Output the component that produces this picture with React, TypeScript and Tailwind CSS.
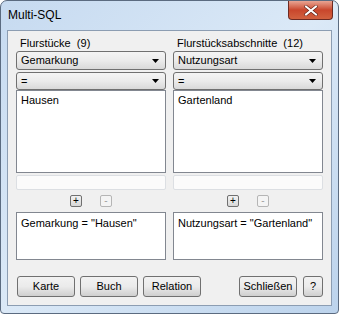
import React from 'react';

const font = { fontFamily: '"Liberation Sans", Arial, sans-serif' };

const Combo = ({ label, h }: { label: string; h: string }) => (
  <div
    className={`flex ${h} items-center justify-between rounded-[3px] border border-[#707070] bg-gradient-to-b from-[#f4f4f4] via-[#ebebeb] to-[#d9d9d9] pl-[4px] pr-[6px] text-[11px] leading-none text-black`}
  >
    <span>{label}</span>
    <svg width="7" height="4" viewBox="0 0 7 4">
      <path d="M0 0h7L3.5 4z" fill="#000" />
    </svg>
  </div>
);

const SmallBtn = ({ sign, disabled }: { sign: string; disabled?: boolean }) => (
  <div
    className={`flex h-[12px] w-[12px] items-center justify-center rounded-[2px] border text-[10px] leading-none ${
      disabled
        ? 'border-[#b5b5b5] bg-[#f4f4f4] text-[#a0a0a0]'
        : 'border-[#707070] bg-gradient-to-b from-[#f2f2f2] to-[#d8d8d8] text-black'
    }`}
  >
    {sign}
  </div>
);

const Column = ({
  title,
  field,
  value,
  query,
}: {
  title: string;
  field: string;
  value: string;
  query: string;
}) => (
  <div className="flex w-[150px] flex-col">
    <div className="h-[20px] whitespace-pre pl-[4px] pt-[7px] text-[11px] leading-none">{title}</div>
    <div className="flex flex-col gap-[2px]">
      <Combo label={field} h="h-[19px]" />
      <Combo label="=" h="h-[18px]" />
    </div>
    <div className="h-[83px] border border-[#828790] bg-white px-[4px] pt-[2px] text-[11px] leading-[14px]">
      {value}
    </div>
    <div className="mt-[2px] h-[15px] rounded-[2px] border border-[#dcdfe3] bg-[#fbfbfb]" />
    <div className="flex h-[22px] items-center justify-center gap-[18px]">
      <SmallBtn sign="+" />
      <SmallBtn sign="-" disabled />
    </div>
    <div className="h-[48px] whitespace-nowrap border border-[#828790] bg-white px-[4px] pt-[3px] text-[11px] leading-[14px]">
      {query}
    </div>
  </div>
);

const Btn = ({ label, w }: { label: string; w: string }) => (
  <div
    className={`flex h-[21px] ${w} items-center justify-center rounded-[3px] border border-[#707070] bg-gradient-to-b from-[#f2f2f2] via-[#ebebeb] to-[#cfcfcf] text-[11px] leading-none text-black`}
  >
    {label}
  </div>
);

export default function App() {
  return (
    <div className="h-[314px] w-[339px] bg-white" style={font}>
      <div className="flex h-full w-full flex-col rounded-t-[7px] rounded-b-[4px] border border-[#5b6b80] bg-gradient-to-br from-[#c6daf0] via-[#dbe9f7] to-[#bcd3ec]">
        <div className="flex h-[29px] items-start justify-between">
          <div className="pl-[7px] pt-[8px] text-[12px] leading-none text-black">Multi-SQL</div>
          <div className="mr-[5px] flex h-[19px] w-[45px] items-center justify-center rounded-b-[4px] border border-t-0 border-[#6d2a22] bg-gradient-to-b from-[#e8a493] via-[#c9462c] to-[#d2613f]">
            <svg width="14" height="11" viewBox="0 0 14 11">
              <path d="M2 1.5l10 8M12 1.5l-10 8" stroke="#5a1a10" strokeWidth="3.2" strokeLinecap="square" />
              <path d="M2 1.5l10 8M12 1.5l-10 8" stroke="#ffffff" strokeWidth="2" strokeLinecap="square" />
            </svg>
          </div>
        </div>
        <div className="mx-[6px] mb-[7px] flex flex-1 flex-col border border-[#8c9db2] bg-[#f0f0f0] px-[8px]">
          <div className="flex gap-[7px]">
            <Column
              title="Flurstücke  (9)"
              field="Gemarkung"
              value="Hausen"
              query={'Gemarkung = "Hausen"'}
            />
            <Column
              title="Flurstücksabschnitte  (12)"
              field="Nutzungsart"
              value="Gartenland"
              query={'Nutzungsart = "Gartenland"'}
            />
          </div>
          <div className="mt-[16px] flex items-center pl-[1px]">
            <div className="flex gap-[5px]">
              <Btn label="Karte" w="w-[58px]" />
              <Btn label="Buch" w="w-[58px]" />
              <Btn label="Relation" w="w-[58px]" />
            </div>
            <div className="ml-auto flex gap-[6px]">
              <Btn label="Schließen" w="w-[58px]" />
              <Btn label="?" w="w-[20px]" />
            </div>
          </div>
        </div>
      </div>
    </div>
  );
}
